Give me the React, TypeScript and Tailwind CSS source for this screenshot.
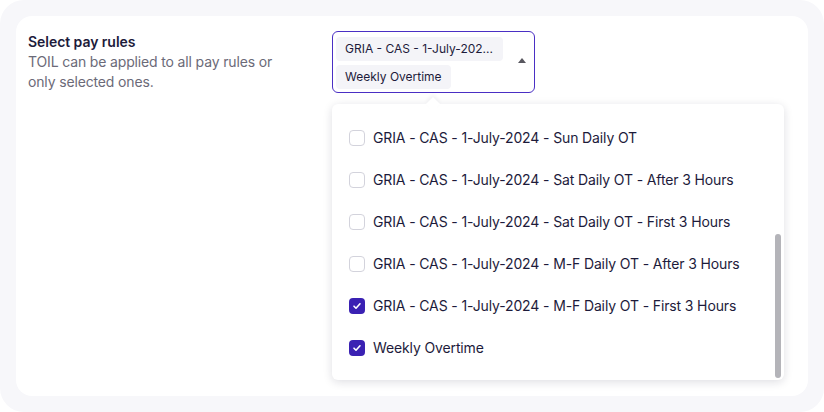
const options = [
  { label: "GRIA - CAS - 1-July-2024 - Sun Daily OT", checked: false },
  { label: "GRIA - CAS - 1-July-2024 - Sat Daily OT - After 3 Hours", checked: false },
  { label: "GRIA - CAS - 1-July-2024 - Sat Daily OT - First 3 Hours", checked: false },
  { label: "GRIA - CAS - 1-July-2024 - M-F Daily OT - After 3 Hours", checked: false },
  { label: "GRIA - CAS - 1-July-2024 - M-F Daily OT - First 3 Hours", checked: true },
  { label: "Weekly Overtime", checked: true },
];

function Checkbox({ checked }: { checked: boolean }) {
  if (checked) {
    return (
      <span className="flex h-4 w-4 shrink-0 items-center justify-center rounded-[4px] bg-[#3a21b3]">
        <svg width="10" height="10" viewBox="0 0 10 10" fill="none">
          <path d="M2 5.2l2 2 4-4.4" stroke="white" strokeWidth="1.6" strokeLinecap="round" strokeLinejoin="round" />
        </svg>
      </span>
    );
  }
  return <span className="h-4 w-4 shrink-0 rounded-[4px] border border-[#d3d3dc] bg-white" />;
}

export default function App() {
  return (
    <div className="h-[412px] w-[824px] bg-white font-['Inter',sans-serif] text-[#1d1b3b]">
      <div className="h-full w-full rounded-[24px] bg-[#f7f7fa] p-4">
        <div className="flex h-full rounded-2xl bg-white pl-3 pt-[15px]">
          <div className="w-[304px] pt-[1px]">
            <h2 className="text-sm font-semibold leading-5 tracking-[-0.05px]">Select pay rules</h2>
            <p className="text-sm leading-5 tracking-[-0.15px] text-[#6b6a78]">
              TOIL can be applied to all pay rules or
              <br />
              only selected ones.
            </p>
          </div>

          <div className="relative">
            <div className="flex h-[62px] w-[203px] items-center rounded-md border border-[#4a2fc4] pb-[2px] pl-[3px] pr-2 pt-[3px]">
              <div className="flex flex-1 flex-col items-start gap-1">
                <span className="flex h-6 w-[167px] items-center rounded bg-[#f4f4f8] px-[9px] text-xs">
                  GRIA - CAS - 1-July-202...
                </span>
                <span className="flex h-6 items-center rounded bg-[#f4f4f8] px-[9px] text-xs">Weekly Overtime</span>
              </div>
              <span className="mt-[-4px] h-0 w-0 border-x-[4px] border-b-[5px] border-x-transparent border-b-[#58575f]" />
            </div>

            <div className="absolute left-0 top-[73px] w-[452px] rounded-md bg-white shadow-[0_2px_10px_rgba(20,20,50,0.14)]">
              <span className="absolute left-[96px] top-[-5px] h-[10px] w-[10px] rotate-45 bg-white shadow-[-2px_-2px_4px_rgba(20,20,50,0.05)]" />
              <div className="relative pb-[11px] pt-[13px]">
                {options.map((o) => (
                  <div key={o.label} className="flex h-[42px] items-center gap-2 pl-[17px] text-sm tracking-[-0.13px]">
                    <Checkbox checked={o.checked} />
                    <span>{o.label}</span>
                  </div>
                ))}
              </div>
              <span className="absolute bottom-[2px] right-[3px] h-[144px] w-[6px] rounded-full bg-[#b4b4b9]" />
            </div>
          </div>
        </div>
      </div>
    </div>
  );
}
